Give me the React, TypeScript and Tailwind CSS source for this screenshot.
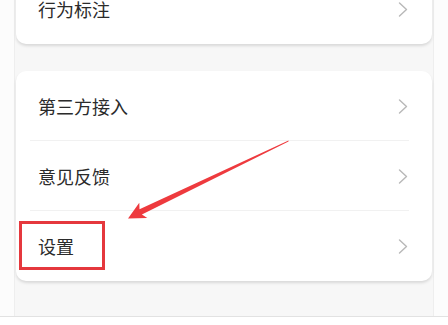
const FONT = '"Noto Sans CJK SC", "Noto Sans", sans-serif';

function Chevron() {
  return (
    <svg width="10" height="15" viewBox="0 0 10 15" aria-hidden={true} className="shrink-0">
      <path d="M1.5 1 L8.5 7.5 L1.5 14" fill="none" stroke="#b8b8b8" strokeWidth="1.4" strokeLinecap="round" strokeLinejoin="round" />
    </svg>
  );
}

function Row({ label, divider }: { label: string; divider?: boolean }) {
  return (
    <div className="relative flex h-[70px] items-center justify-between pl-[22px] pr-[24px]">
      <span className="text-[18px] text-[#2b2b2b]">{label}</span>
      <Chevron />
      {divider && <div className="absolute bottom-0 left-[14px] right-[23px] h-px bg-[#f1f1f1]" />}
    </div>
  );
}

export default function App() {
  return (
    <div className="relative h-[325px] w-[448px] overflow-hidden bg-[#fcfcfc]" style={{ fontFamily: FONT }}>
      <div className="mx-[14px] flex h-[316px] flex-col border-x border-[#eeeeee] bg-[#f7f7f7] px-px">
        <div className="-mt-[26px] rounded-b-[10px] bg-white shadow-[0_2px_3px_rgba(0,0,0,0.12)]">
          <Row label="行为标注" />
        </div>
        <div className="mt-[27px] rounded-[10px] bg-white shadow-[0_2px_3px_rgba(0,0,0,0.12)]">
          <Row label="第三方接入" divider />
          <Row label="意见反馈" divider />
          <Row label="设置" />
        </div>
      </div>
      <div className="h-px bg-[#e2e2e2]" />
      <div className="h-[8px] bg-white" />

      <div className="absolute left-[19px] top-[221px] h-[49px] w-[86px] border-[3px] border-[#e5383d]" />
      <svg className="pointer-events-none absolute left-0 top-0" width="448" height="325" aria-hidden={true}>
        <polygon
          points="288.5,140.5 139.5,209.2 139.3,202.8 128,218.5 147.3,218 141.9,214.4 288.5,141.5"
          fill="#ee3a3e"
        />
      </svg>
    </div>
  );
}
